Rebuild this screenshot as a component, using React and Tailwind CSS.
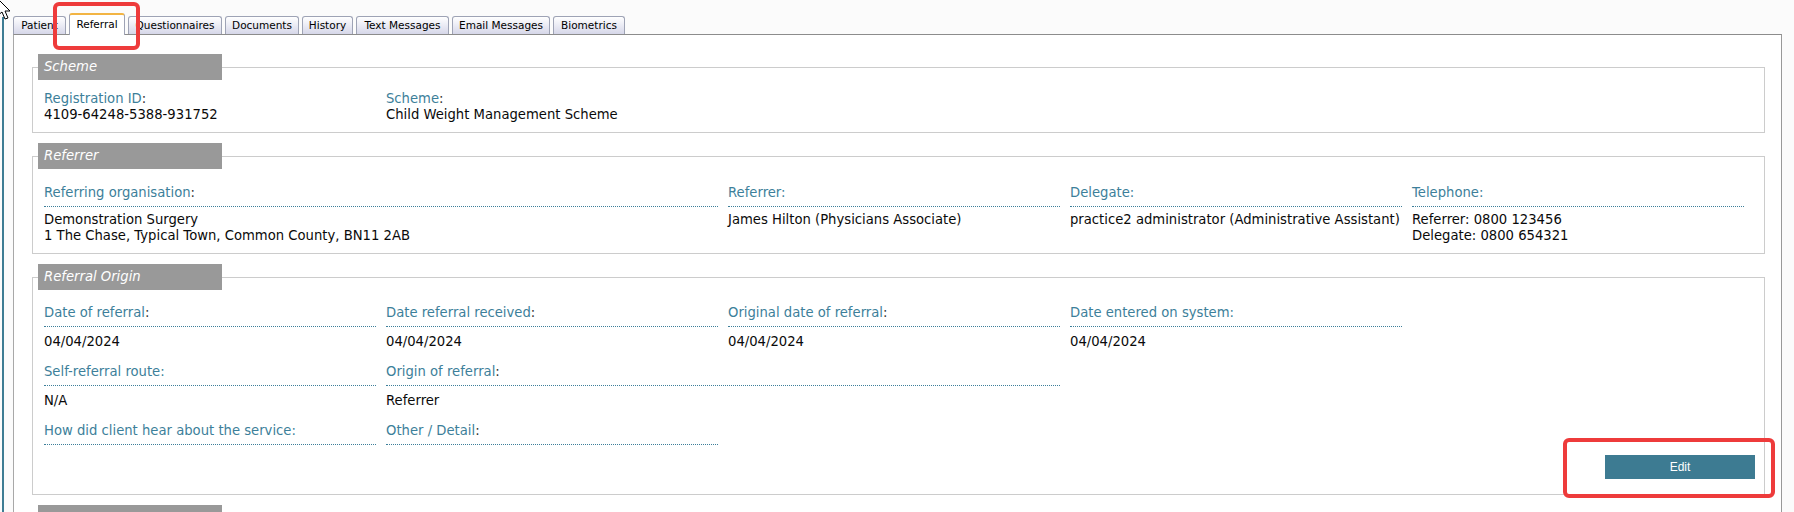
import React from 'react';

const tabs = [
  { name: 'Patient', w: 'w-[53px]' },
  { name: 'Referral', w: 'w-[56px]', active: true },
  { name: 'Questionnaires', w: 'w-[94px]' },
  { name: 'Documents', w: 'w-[74px]' },
  { name: 'History', w: 'w-[51px]' },
  { name: 'Text Messages', w: 'w-[93px]' },
  { name: 'Email Messages', w: 'w-[98px]' },
  { name: 'Biometrics', w: 'w-[72px]' },
];

function Label({ text, dark, dotted = true }) {
  return (
    <div
      className={
        'text-[13.2px] leading-[16px] text-[#3d7f9a] whitespace-nowrap ' +
        (dotted ? 'pb-[5px] border-b border-dotted border-[#3d7f9a]' : '')
      }
    >
      {text}
      <span className={dark ? 'text-[#333333]' : ''}>:</span>
    </div>
  );
}

function Field({ label, dark, values, span, dotted = true, gap = 'mt-[6px]' }) {
  return (
    <div className={span ? 'col-span-2' : ''}>
      <Label text={label} dark={dark} dotted={dotted} />
      {values && (
        <div className={(dotted ? gap : '') + ' text-[13.2px] leading-[16px] text-[#0a0a0a] whitespace-nowrap'}>
          {values.map((v) => (
            <div key={v}>{v}</div>
          ))}
        </div>
      )}
    </div>
  );
}

function Section({ title, children, className = '' }) {
  return (
    <fieldset className={'border border-[#cccccc] ml-[18px] mr-[16px] ' + className}>
      <legend className="ml-[5px] w-[184px] h-[26px] bg-[#999999] px-[6px] text-[13.2px] leading-[26px] italic text-white">
        {title}
      </legend>
      {children}
    </fieldset>
  );
}

export default function App() {
  return (
    <div
      className="relative h-[512px] w-[1794px] overflow-hidden bg-[#fbfbfb] flex"
      style={{ fontFamily: '"DejaVu Sans", Verdana, sans-serif' }}
    >
      {/* left frame edge */}
      <div className="w-[13px] shrink-0">
        <div className="ml-[2px] mt-[17px] w-[2px] h-[495px] bg-[#3d7c93]" />
      </div>

      <div className="w-[1769px] shrink-0">
        {/* Tabs */}
        <div className="flex items-end gap-[3px] h-[34px]">
          {tabs.map((t) =>
            t.active ? (
              <div
                key={t.name}
                className={`${t.w} h-[22px] -mb-px relative z-10 flex items-center justify-center bg-white border-x border-[#9ea3b5] border-t-2 border-t-[#f2b443] rounded-t-[3px] text-[10.5px] text-black`}
              >
                {t.name}
              </div>
            ) : (
              <div
                key={t.name}
                className={`${t.w} h-[18px] flex items-center justify-center bg-gradient-to-b from-[#ffffff] to-[#d6d7e9] border border-b-0 border-[#9ea3b5] rounded-t-[3px] text-[10.5px] text-black`}
              >
                {t.name}
              </div>
            )
          )}
        </div>

        {/* Panel */}
        <div className="h-[478px] bg-white border-t border-t-[#8c8c8c] border-l border-l-[#a8a8a8] border-r border-r-[#999999] pt-[19px]">
          <Section title="Scheme">
            <div className="pl-[11px] pt-[11px] pb-[9px] grid grid-cols-[repeat(5,332px)] gap-x-[10px]">
              <Field label="Registration ID" dark dotted={false} values={['4109-64248-5388-931752']} />
              <Field label="Scheme" dark dotted={false} values={['Child Weight Management Scheme']} />
            </div>
          </Section>

          <Section title="Referrer" className="mt-[10px]">
            <div className="pl-[11px] pt-[16px] pb-[9px] grid grid-cols-[repeat(5,332px)] gap-x-[10px]">
              <Field
                label="Referring organisation"
                dark
                span
                gap="mt-[5px]"
                values={['Demonstration Surgery', '1 The Chase, Typical Town, Common County, BN11 2AB']}
              />
              <Field label="Referrer" gap="mt-[5px]" values={['James Hilton (Physicians Associate)']} />
              <Field
                label="Delegate"
                gap="mt-[5px]"
                values={['practice2 administrator (Administrative Assistant)']}
              />
              <Field
                label="Telephone"
                gap="mt-[5px]"
                values={['Referrer: 0800 123456', 'Delegate: 0800 654321']}
              />
            </div>
          </Section>

          <Section title="Referral Origin" className="mt-[10px]">
            <div className="pl-[11px] pt-[15px] pb-[15px]">
              <div className="grid grid-cols-[repeat(5,332px)] gap-x-[10px] gap-y-[14px]">
                <Field label="Date of referral" dark gap="mt-[7px]" values={['04/04/2024']} />
                <Field label="Date referral received" dark gap="mt-[7px]" values={['04/04/2024']} />
                <Field label="Original date of referral" dark gap="mt-[7px]" values={['04/04/2024']} />
                <Field label="Date entered on system" gap="mt-[7px]" values={['04/04/2024']} />
                <div />
                <Field label="Self-referral route" gap="mt-[7px]" values={['N/A']} />
                <Field label="Origin of referral" dark span gap="mt-[7px]" values={['Referrer']} />
                <div />
                <div />
                <Field label="How did client hear about the service" />
                <Field label="Other / Detail" dark />
              </div>
              <div className="mt-[10px] flex justify-end pr-[9px]">
                <button
                  className="w-[150px] h-[24px] bg-[#3d7b92] text-white text-[12px]"
                  style={{ fontFamily: '"Liberation Sans", Arial, sans-serif' }}
                >
                  Edit
                </button>
              </div>
            </div>
          </Section>

          <Section title={'\u00a0'} className="mt-[10px] h-[40px]" />
        </div>
      </div>

      {/* annotation boxes */}
      <div className="absolute left-[53px] top-[2px] w-[87px] h-[48px] border-[4px] border-[#ee3b3b] rounded-[6px] pointer-events-none" />
      <div className="absolute left-[1563px] top-[438px] w-[212px] h-[60px] border-[4px] border-[#ee3b3b] rounded-[6px] pointer-events-none" />

      {/* mouse cursor */}
      <svg className="absolute left-0 top-0" width="14" height="22" viewBox="0 0 14 22">
        <path d="M-3 -2 L10 11 L5 11 L8 18 L5 19 L2 12 L-3 16 Z" fill="#ffffff" stroke="#000000" strokeWidth="1" />
      </svg>
    </div>
  );
}
